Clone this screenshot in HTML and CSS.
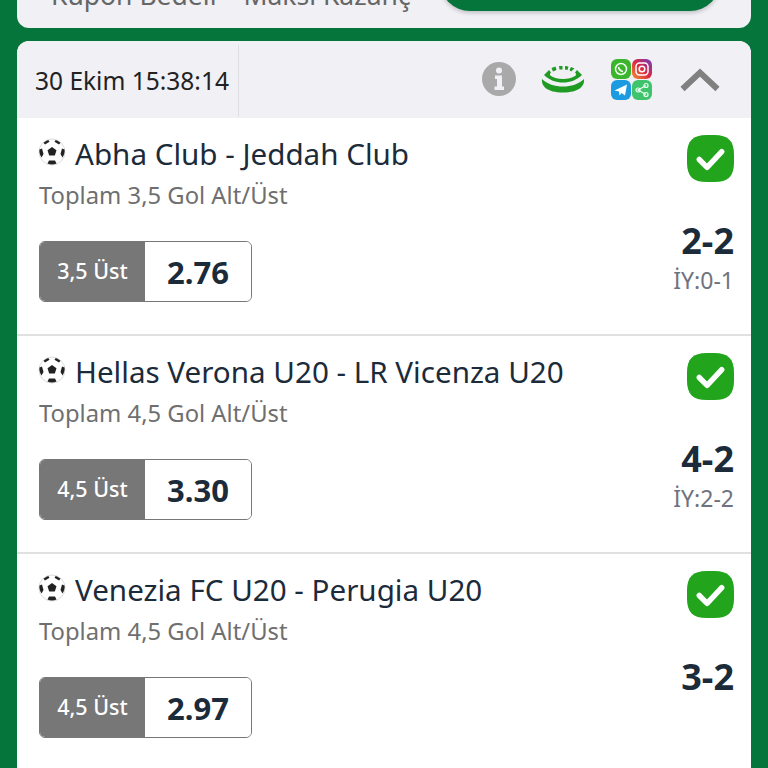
FILE: index.html
```html
<!DOCTYPE html>
<html>
<head>
  <title>Kupon</title>
  <link rel="stylesheet" href="styles.css">
</head>
<body>
  <div class="summary-card">
    <div class="summary-labels">
      <span>Kupon Bedeli</span>
      <span>Maksi Kazanç</span>
    </div>
    <div class="play-button"></div>
  </div>

  <div class="coupon-card">
    <div class="coupon-head">
      <div class="coupon-date">30 Ekim 15:38:14</div>
      <div class="coupon-tools">
        <svg class="icon-info" width="36" height="36" viewBox="0 0 36 36">
          <circle cx="18" cy="18" r="17" fill="#a9a9a9"/>
          <circle cx="18" cy="9.5" r="3" fill="#f1f1f5"/>
          <path d="M14 14.5h7v11h2v3.500H13.500v-3.500h2.500v-7.500h-2z" fill="#f1f1f5"/>
        </svg>
        <svg class="icon-stadium" width="44" height="28" viewBox="0 0 44 28">
          <path d="M1 14c5 5 13 7.500 21 7.500S38 19 43 14c1 7-5 13.500-21 13.500S0 21 1 14z" fill="#1f9a23"/>
          <path d="M3 10l5-5 2 2.500C8.500 9 8.500 10 10 11c3 2 7 3 12 3s9-1 12-3c1.500-1 1.500-2 0-3.500L36 5l5 5c-5 5-12 7.500-19 7.500S8 15 3 10z" fill="#1f9a23"/>
          <path d="M12 6.500L10.500 3l4-1.500 1 3.500zM18.500 4.500L18 1h3.500v3.500zM24 4.500V1l3.500.5-1 3.500zM30 6.500L28.500 5l1.500-3 3.500 1.500z" fill="#1f9a23"/>
        </svg>
        <div class="share-grid">
          <svg width="20" height="20" viewBox="0 0 20 20">
            <rect width="20" height="20" rx="6" fill="#3cb52e"/>
            <circle cx="10" cy="10" r="5.5" fill="none" stroke="#f2fff0" stroke-width="1.5"/>
            <path d="M7.5 8c.5 2.500 2 4 4.500 4.500" fill="none" stroke="#f2fff0" stroke-width="1.5"/>
          </svg>
          <svg width="20" height="20" viewBox="0 0 20 20">
            <defs>
              <linearGradient id="insta" x1="0" y1="1" x2="1" y2="0">
                <stop offset="0" stop-color="#f09433"/>
                <stop offset="0.5" stop-color="#dc2743"/>
                <stop offset="1" stop-color="#6a3fc8"/>
              </linearGradient>
            </defs>
            <rect width="20" height="20" rx="6" fill="url(#insta)"/>
            <rect x="4" y="4" width="12" height="12" rx="3.5" fill="none" stroke="#fff" stroke-width="1.5"/>
            <circle cx="10" cy="10" r="2.8" fill="none" stroke="#fff" stroke-width="1.5"/>
          </svg>
          <svg width="20" height="20" viewBox="0 0 20 20">
            <rect width="20" height="20" rx="6" fill="#1d9be0"/>
            <path d="M3.5 10.5L16 4.500l-2 11-3.500-2.500-2 2.500-.5-4z" fill="#fff"/>
          </svg>
          <svg width="20" height="20" viewBox="0 0 20 20">
            <rect width="20" height="20" rx="6" fill="#3fc46d"/>
            <path d="M14 5.5L6 10l8 4.500" fill="none" stroke="#eafff0" stroke-width="1.2"/>
            <circle cx="14" cy="5.5" r="2" fill="none" stroke="#eafff0" stroke-width="1.2"/>
            <circle cx="6" cy="10" r="2" fill="none" stroke="#eafff0" stroke-width="1.2"/>
            <circle cx="14" cy="14.5" r="2" fill="none" stroke="#eafff0" stroke-width="1.2"/>
          </svg>
        </div>
        <svg class="icon-chevron" width="40" height="24" viewBox="0 0 40 24">
          <path d="M2.5 21L20 4.500 37.500 21" fill="none" stroke="#808080" stroke-width="6"/>
        </svg>
      </div>
    </div>

    <div class="match-row">
      <div class="match-main">
        <div class="match-title"><svg class="ball" width="28" height="28" viewBox="0 0 28 28"><use href="#ball-shape"/></svg>Abha Club - Jeddah Club</div>
        <div class="match-market">Toplam 3,5 Gol Alt/Üst</div>
        <div class="bet-box"><div class="bet-label">3,5 Üst</div><div class="bet-odd">2.76</div></div>
      </div>
      <div class="match-side">
        <svg class="check" width="47" height="47" viewBox="0 0 48 48"><use href="#check-shape"/></svg>
        <div class="score">2-2</div>
        <div class="half-score">İY:0-1</div>
      </div>
    </div>

    <div class="match-row">
      <div class="match-main">
        <div class="match-title"><svg class="ball" width="28" height="28" viewBox="0 0 28 28"><use href="#ball-shape"/></svg>Hellas Verona U20 - LR Vicenza U20</div>
        <div class="match-market">Toplam 4,5 Gol Alt/Üst</div>
        <div class="bet-box"><div class="bet-label">4,5 Üst</div><div class="bet-odd">3.30</div></div>
      </div>
      <div class="match-side">
        <svg class="check" width="47" height="47" viewBox="0 0 48 48"><use href="#check-shape"/></svg>
        <div class="score">4-2</div>
        <div class="half-score">İY:2-2</div>
      </div>
    </div>

    <div class="match-row">
      <div class="match-main">
        <div class="match-title"><svg class="ball" width="28" height="28" viewBox="0 0 28 28"><use href="#ball-shape"/></svg>Venezia FC U20 - Perugia U20</div>
        <div class="match-market">Toplam 4,5 Gol Alt/Üst</div>
        <div class="bet-box"><div class="bet-label">4,5 Üst</div><div class="bet-odd">2.97</div></div>
      </div>
      <div class="match-side">
        <svg class="check" width="47" height="47" viewBox="0 0 48 48"><use href="#check-shape"/></svg>
        <div class="score">3-2</div>
      </div>
    </div>
  </div>

  <!-- shared icon shapes -->
  <svg class="icon-defs" width="0" height="0">
    <defs>
      <g id="ball-shape">
        <circle cx="14" cy="14" r="13" fill="#fff" stroke="#dcdcdc" stroke-width="1"/>
        <path d="M14 9l4.500 3.200-1.700 5.300h-5.600l-1.700-5.300z" fill="#222"/>
        <path d="M5.5 4.800c1.300-1.300 3-2.300 4.800-2.900l1.200 1.800L7 6.500z" fill="#222"/>
        <path d="M22.5 4.800c-1.300-1.300-3-2.300-4.800-2.900l-1.200 1.800L21 6.500z" fill="#222"/>
        <path d="M1.5 11.500l2.500-1 1.500 5.500-2 3.500C1.800 17 1 14 1.500 11.500z" fill="#222"/>
        <path d="M26.5 11.500l-2.500-1-1.500 5.500 2 3.500c1.700-2.500 2.500-5.500 2-8z" fill="#222"/>
        <path d="M9.5 25.500l1.500-3h6l1.500 3c-2.800 1.200-6.200 1.200-9 0z" fill="#222"/>
      </g>
      <g id="check-shape">
        <path d="M24 0h4C42 0 48 6 48 20v8c0 14-6 20-20 20h-8C6 48 0 42 0 28v-8C0 6 6 0 20 0z" fill="#22a51c"/>
        <path d="M12.5 25l8 8L35.500 17" fill="none" stroke="#fff" stroke-width="5.5" stroke-linecap="round" stroke-linejoin="round"/>
      </g>
    </defs>
  </svg>
</body>
</html>
```

FILE: styles.css
```css
html,
body {
  height: 100%;
}

body {
  background-color: #05753b;
  font-family: "Noto Sans", "Open Sans", Arial, sans-serif;
  color: #1c2b3a;
  margin: 0;
  padding: 0 17px;
  overflow: hidden;
}

.summary-card {
  background-color: #f0f0f5;
  border-radius: 0 0 12px 12px;
  height: 28px;
  display: flex;
  justify-content: space-between;
  align-items: flex-end;
  overflow: hidden;
  padding: 0 31px 0 34px;
  box-sizing: border-box;
}

.summary-labels {
  display: flex;
  gap: 27px;
  font-size: 26.5px;
  line-height: 30px;
  color: #666;
  margin-bottom: 18px;
  white-space: nowrap;
}

.play-button {
  width: 280px;
  height: 40px;
  flex-shrink: 0;
  background-color: #05753b;
  border-radius: 0 0 30px 30px;
  margin-bottom: 17px;
  box-shadow: 0 2px 4px rgba(0, 0, 0, 0.2);
}

.coupon-card {
  margin-top: 13px;
  background-color: #fff;
  border-radius: 12px 12px 0 0;
  overflow: hidden;
}

.coupon-head {
  background-color: #f0f0f5;
  height: 77px;
  display: flex;
  align-items: center;
  justify-content: space-between;
}

.coupon-date {
  font-size: 24.5px;
  color: #222;
  padding: 0 9px 0 18px;
  height: 72px;
  line-height: 72px;
  border-right: 1px solid #dedee2;
  margin-top: 3px;
  white-space: nowrap;
}

.coupon-tools {
  display: flex;
  align-items: center;
  padding-right: 31px;
}

.icon-info {
  margin-right: 24px;
  margin-top: -1px;
}

.icon-stadium {
  margin-right: 26px;
  margin-top: -2px;
}

.share-grid {
  display: grid;
  grid-template-columns: 20px 20px;
  gap: 1px;
  margin-right: 28px;
}

.share-grid svg {
  display: block;
}

.icon-chevron {
  display: block;
}

.icon-defs {
  position: absolute;
}

.match-row {
  height: 216px;
  border-bottom: 2px solid #e0e0e0;
  display: flex;
  justify-content: space-between;
  padding: 0 17px 0 22px;
}

.match-title {
  display: flex;
  align-items: center;
  font-size: 29.6px;
  line-height: 40px;
  color: #1c2b3a;
  margin-top: 16px;
  white-space: nowrap;
}

.ball {
  margin-right: 9px;
  margin-left: -1px;
  margin-top: -4px;
}

.match-market {
  font-size: 23.8px;
  line-height: 30px;
  color: #6f6f6f;
  margin-top: 6px;
}

.bet-box {
  display: flex;
  width: 213px;
  height: 61px;
  box-sizing: border-box;
  border: 1px solid #777;
  border-radius: 6px;
  margin-top: 31px;
  overflow: hidden;
}

.bet-label {
  width: 105px;
  background-color: #777;
  color: #fff;
  font-size: 21.5px;
  font-weight: 500;
  line-height: 58px;
  text-align: center;
}

.bet-odd {
  flex: 1;
  background-color: #fff;
  font-size: 31px;
  font-weight: 700;
  line-height: 60px;
  text-align: center;
  color: #1c2b3a;
}

.match-side {
  display: flex;
  flex-direction: column;
  align-items: flex-end;
  padding-top: 17px;
}

.score {
  font-size: 36px;
  font-weight: 700;
  line-height: 40px;
  margin-top: 39px;
  color: #1c2b3a;
}

.half-score {
  font-size: 23px;
  line-height: 30px;
  color: #6f7380;
  margin-top: 4px;
}
```
